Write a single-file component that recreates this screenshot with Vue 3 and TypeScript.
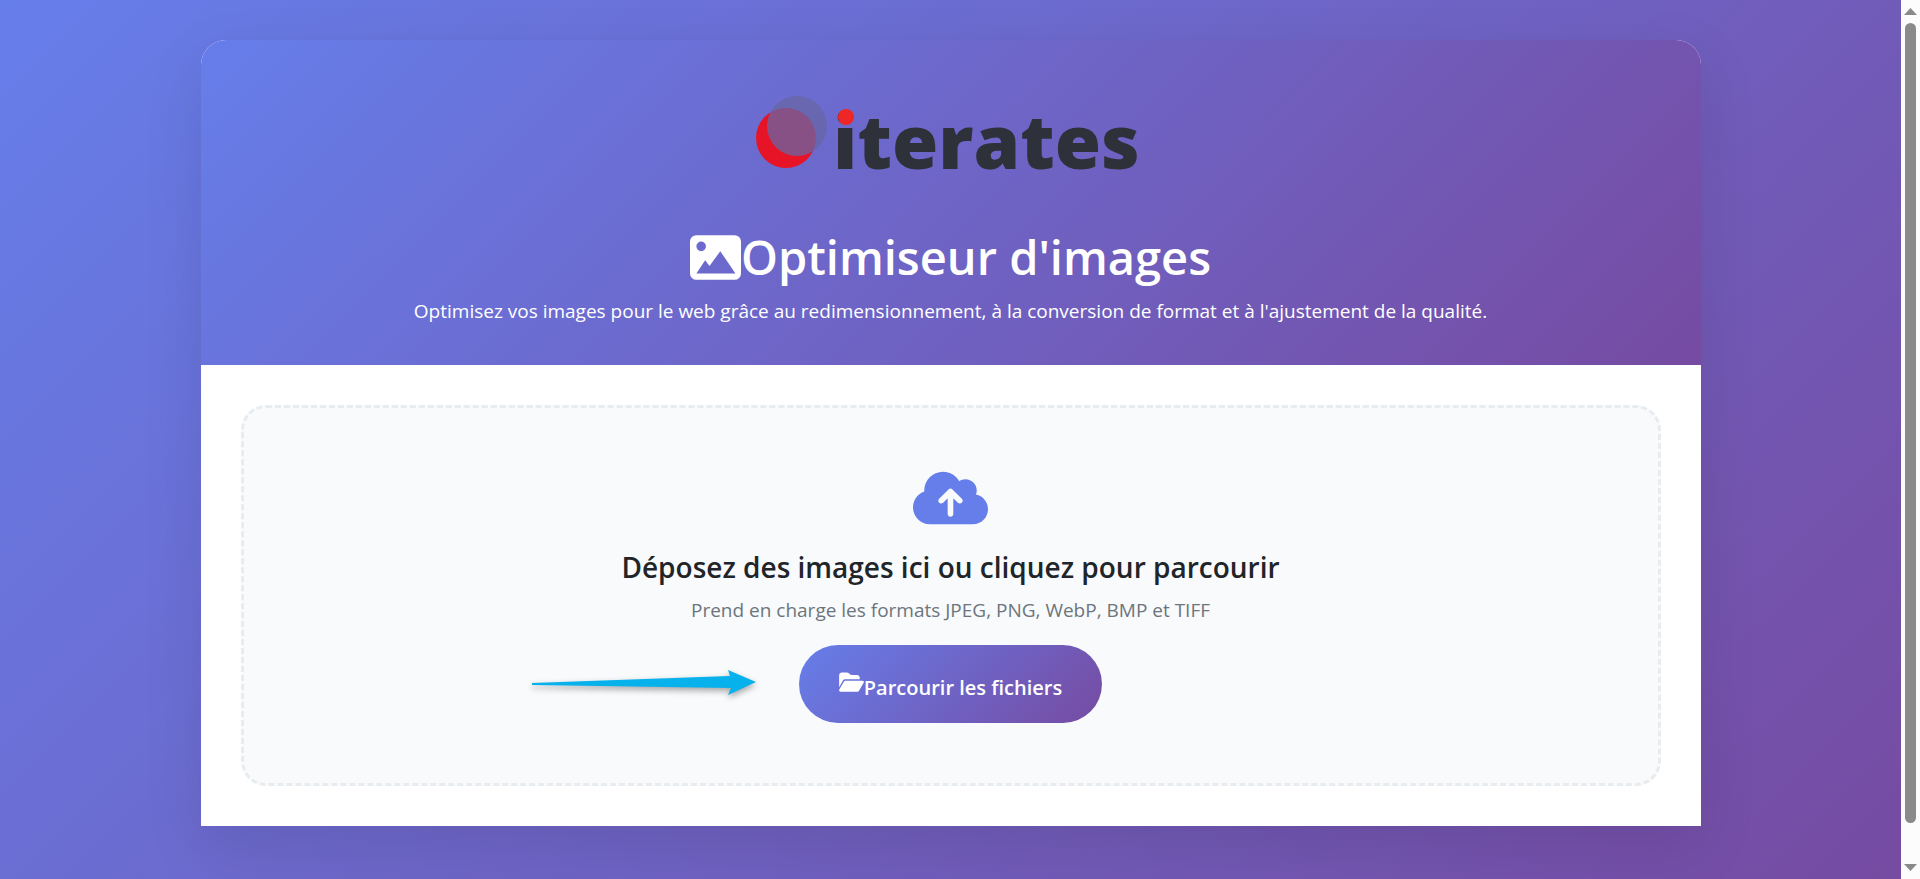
<script setup lang="ts">
import { ref } from 'vue'

const picker = ref<HTMLInputElement | null>(null)
const openPicker = (): void => picker.value?.click()
</script>

<template>
  <div class="viewport">
    <div class="page">
      <main class="card">
        <header class="header">
          <svg class="logo" viewBox="0 0 400 110" role="img" aria-label="iterates">
            <circle cx="35" cy="58" r="30" fill="#e61426" />
            <circle cx="46" cy="46" r="30" fill="#6765a6" fill-opacity="0.75" />
            <text class="wordmark" x="82" y="89">iterates</text>
            <circle cx="95" cy="37" r="8" fill="#ee2626" />
          </svg>
          <h1 class="title">
            <svg class="title-icon" viewBox="0 0 512 512" aria-hidden="true">
              <path fill="currentColor" fill-rule="evenodd" d="M64 32H448a64 64 0 0 1 64 64V416a64 64 0 0 1-64 64H64a64 64 0 0 1-64-64V96a64 64 0 0 1 64-64zM112 96a48 48 0 1 0 0 96 48 48 0 1 0 0-96zM64 416H456L304 192 196 342 152 284Z" />
            </svg>
            <span>Optimiseur d'images</span>
          </h1>
          <p class="subtitle">Optimisez vos images pour le web grâce au redimensionnement, à la conversion de format et à l'ajustement de la qualité.</p>
        </header>
        <section class="content">
          <div class="dropzone">
            <svg class="cloud" viewBox="0 0 640 512" aria-hidden="true">
              <path fill="currentColor" d="M144 480C64.5 480 0 415.5 0 336c0-62.8 40.2-116.2 96.2-135.9c-.1-2.7-.2-5.4-.2-8.1c0-88.4 71.6-160 160-160c59.3 0 111 32.2 138.7 80.2C409.9 102 428.3 96 448 96c53 0 96 43 96 96c0 12.2-2.3 23.8-6.4 34.6C596 238.4 640 290.1 640 352c0 70.7-57.3 128-128 128H144zm79-217c-9.4 9.4-9.4 24.6 0 33.9s24.6 9.4 33.9 0l39-39V392c0 13.3 10.7 24 24 24s24-10.7 24-24V257.9l39 39c9.4 9.4 24.6 9.4 33.9 0s9.4-24.6 0-33.9l-80-80c-9.4-9.4-24.6-9.4-33.9 0l-80 80z" />
            </svg>
            <h2 class="drop-title">Déposez des images ici ou cliquez pour parcourir</h2>
            <p class="formats">Prend en charge les formats JPEG, PNG, WebP, BMP et TIFF</p>
            <div class="action">
              <svg class="pointer" viewBox="0 0 240 40" aria-hidden="true">
                <path fill="#06b1ec" d="M5 20 203 13 201 7 229 19 201 32 204 25 5 22Z" />
              </svg>
              <button class="browse" type="button" @click="openPicker">
                <svg class="folder" viewBox="0 0 576 512" aria-hidden="true">
                  <path fill="currentColor" d="M88.7 223.8L0 375.8V96C0 60.7 28.7 32 64 32H181.5c17 0 33.3 6.7 45.3 18.7l26.5 26.5c12 12 28.3 18.7 45.3 18.7H416c35.3 0 64 28.7 64 64v32H144c-22.8 0-43.8 12.1-55.3 31.8zm27.6 16.1C122.1 230 132.6 224 144 224H544c11.5 0 22 6.1 27.7 16.1s5.7 22.2-.1 32.1l-112 192C453.9 474 443.4 480 432 480H32c-11.5 0-22-6.1-27.7-16.1s-5.7-22.2 .1-32.1l112-192z" />
                </svg>
                <span class="browse-label">Parcourir les fichiers</span>
              </button>
            </div>
            <input ref="picker" type="file" accept="image/*" multiple hidden aria-label="Parcourir les fichiers" />
          </div>
        </section>
      </main>
    </div>
    <div class="scrollbar" aria-hidden="true">
      <svg class="scroll-arrow" viewBox="0 0 13 7"><path d="M0 7 6.5 0 13 7Z" fill="#8a8a8a" /></svg>
      <div class="track"><div class="thumb"></div></div>
      <svg class="scroll-arrow" viewBox="0 0 13 7"><path d="M0 0H13L6.5 7Z" fill="#8a8a8a" /></svg>
    </div>
  </div>
</template>

<style>
body {
  margin: 0;
}
</style>

<style scoped>
.viewport {
  display: flex;
  min-height: 100vh;
  font-family: "Open Sans", "Noto Sans", sans-serif;
  color: #212529;
}

.page {
  flex: 1;
  min-width: 0;
  box-sizing: border-box;
  padding: 40px 24px;
  overflow: hidden;
  background: linear-gradient(135deg, #667eea 0%, #764ba2 100%);
}

.card {
  max-width: 1500px;
  margin: 0 auto;
  border-radius: 25px 25px 0 0;
  background: #fff;
  box-shadow: 0 20px 60px rgba(0, 0, 0, 0.1);
}

.header {
  display: flex;
  flex-direction: column;
  align-items: center;
  padding: 40px 40px 39px;
  border-radius: 25px 25px 0 0;
  background: linear-gradient(135deg, #667eea 0%, #764ba2 100%);
  color: #fff;
  text-align: center;
}

.logo {
  width: 400px;
  max-width: 100%;
  height: 110px;
}

.wordmark {
  font-family: "Open Sans", sans-serif;
  font-size: 75px;
  font-weight: 800;
  fill: #2e3139;
}

.title {
  display: flex;
  align-items: center;
  margin: 36px 0 8px;
  font-size: 47px;
  font-weight: 600;
  line-height: 62px;
}

.title-icon {
  flex: none;
  width: 51px;
  height: 51px;
}

.subtitle {
  margin: 0;
  font-size: 19px;
  line-height: 30px;
}

.content {
  padding: 40px;
}

.dropzone {
  display: flex;
  flex-direction: column;
  align-items: center;
  padding: 60px 40px;
  border: 3px dashed #e9ecef;
  border-radius: 25px;
  background: #f8fafc;
  text-align: center;
}

.cloud {
  width: 75px;
  height: 60px;
  color: #667eea;
}

.drop-title {
  margin: 20px 0 8px;
  font-size: 28px;
  font-weight: 600;
  line-height: 39px;
}

.formats {
  margin: 0 0 20px;
  color: #6c757d;
  font-size: 19px;
  line-height: 30px;
}

.action {
  position: relative;
}

.pointer {
  position: absolute;
  top: 18px;
  right: calc(100% + 32px);
  width: 240px;
  height: 40px;
  filter: drop-shadow(0 3px 3px rgba(0, 0, 0, 0.35));
}

.browse {
  display: flex;
  align-items: center;
  height: 78px;
  padding: 0 40px;
  border: 0;
  border-radius: 39px;
  background: linear-gradient(135deg, #667eea 0%, #764ba2 100%);
  color: #fff;
  font-family: inherit;
  font-size: 20px;
  font-weight: 600;
  white-space: nowrap;
  cursor: pointer;
}

.folder {
  flex: none;
  width: 25px;
  height: 22px;
  margin-bottom: 4px;
}

.browse-label {
  padding-top: 6px;
}

.scrollbar {
  position: sticky;
  top: 0;
  display: flex;
  flex: none;
  flex-direction: column;
  align-items: center;
  box-sizing: border-box;
  width: 19px;
  height: 100vh;
  padding: 8px 0;
  background: #fcfcfc;
}

.scroll-arrow {
  flex: none;
  width: 13px;
  height: 7px;
}

.track {
  flex: 1;
  margin: 8px 0;
}

.thumb {
  width: 11px;
  height: 96%;
  border-radius: 6px;
  background: #8a8a8a;
}
</style>
